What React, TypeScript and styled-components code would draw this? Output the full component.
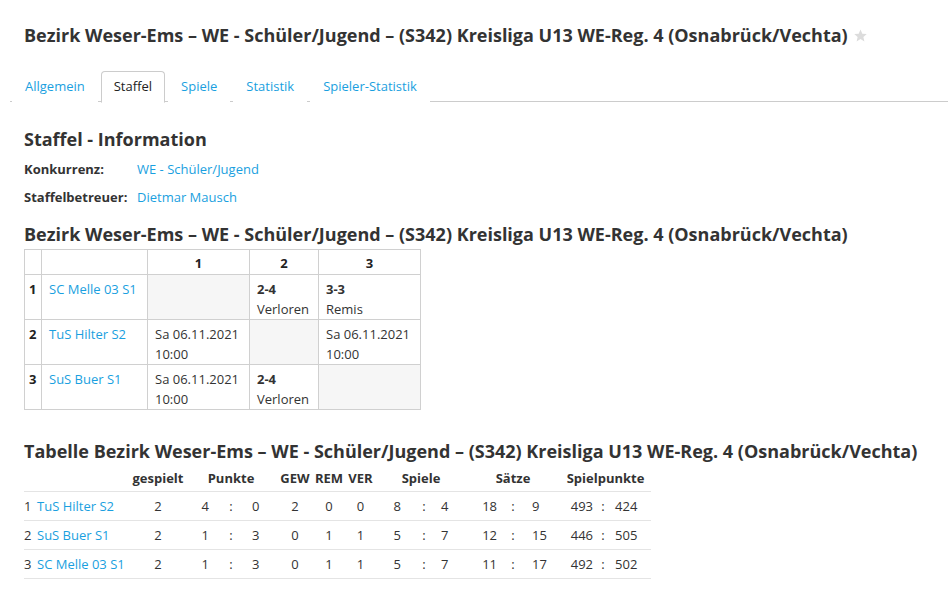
import React from 'react';
import styled, { createGlobalStyle } from 'styled-components';

interface MatrixRow {
  nr: number;
  team: string;
  cells: (null | { top: string; bottom: string; bold?: boolean })[];
}

interface StandingRow {
  rank: number;
  team: string;
  played: number;
  points: [number, number];
  won: number;
  drawn: number;
  lost: number;
  games: [number, number];
  sets: [number, number];
  balls: [number, number];
}

const matrix: MatrixRow[] = [
  {
    nr: 1,
    team: 'SC Melle 03 S1',
    cells: [null, { top: '2-4', bottom: 'Verloren', bold: true }, { top: '3-3', bottom: 'Remis', bold: true }],
  },
  {
    nr: 2,
    team: 'TuS Hilter S2',
    cells: [{ top: 'Sa 06.11.2021', bottom: '10:00' }, null, { top: 'Sa 06.11.2021', bottom: '10:00' }],
  },
  {
    nr: 3,
    team: 'SuS Buer S1',
    cells: [{ top: 'Sa 06.11.2021', bottom: '10:00' }, { top: '2-4', bottom: 'Verloren', bold: true }, null],
  },
];

const standings: StandingRow[] = [
  { rank: 1, team: 'TuS Hilter S2', played: 2, points: [4, 0], won: 2, drawn: 0, lost: 0, games: [8, 4], sets: [18, 9], balls: [493, 424] },
  { rank: 2, team: 'SuS Buer S1', played: 2, points: [1, 3], won: 0, drawn: 1, lost: 1, games: [5, 7], sets: [12, 15], balls: [446, 505] },
  { rank: 3, team: 'SC Melle 03 S1', played: 2, points: [1, 3], won: 0, drawn: 1, lost: 1, games: [5, 7], sets: [11, 17], balls: [492, 502] },
];

const leagueName = 'Bezirk Weser-Ems – WE - Schüler/Jugend – (S342) Kreisliga U13 WE-Reg. 4 (Osnabrück/Vechta)';

const tabs = ['Allgemein', 'Staffel', 'Spiele', 'Statistik', 'Spieler-Statistik'];

// column widths of the standings table, in px
const standingCols = [13, 94, 54, 36, 20, 36, 36, 32, 31, 38, 20, 32, 39, 16, 39, 37, 12, 42];

// padding of the left / right number in each "a : b" group
const pairPads = {
  points: [12, 11],
  games: [13, 7],
  sets: [8, 11],
  balls: [4, 6],
};

const App: React.FC = () => {
  const pair = (v: [number, number], pads: number[]) => (
    <>
      <NumCell $align="right" $pad={pads[0]}>{v[0]}</NumCell>
      <NumCell $align="center">:</NumCell>
      <NumCell $align="left" $pad={pads[1]}>{v[1]}</NumCell>
    </>
  );

  return (
    <Page>
      <GlobalStyle />
      <PageTitle>
        {leagueName}
        <Star viewBox="0 0 24 24">
          <path d="M12 2.5l2.9 6.6 7.1.6-5.4 4.7 1.6 7-6.2-3.7-6.2 3.7 1.6-7L2 9.7l7.1-.6z" />
        </Star>
      </PageTitle>

      <TabBar>
        {tabs.map((t) => (
          <Tab key={t} $active={t === 'Staffel'}>
            {t}
          </Tab>
        ))}
      </TabBar>

      <Content>
        <SectionTitle>Staffel - Information</SectionTitle>
        <InfoList>
          <InfoLabel>Konkurrenz:</InfoLabel>
          <Link href="#">WE - Schüler/Jugend</Link>
          <InfoLabel>Staffelbetreuer:</InfoLabel>
          <Link href="#">Dietmar Mausch</Link>
        </InfoList>

        <MatrixTitle>{leagueName}</MatrixTitle>
        <Matrix>
          <colgroup>
            <col style={{ width: 17 }} />
            <col style={{ width: 106 }} />
            <col style={{ width: 102 }} />
            <col style={{ width: 69 }} />
            <col style={{ width: 102 }} />
          </colgroup>
          <thead>
            <tr>
              <MatrixHead />
              <MatrixHead />
              <MatrixHead>1</MatrixHead>
              <MatrixHead>2</MatrixHead>
              <MatrixHead>3</MatrixHead>
            </tr>
          </thead>
          <tbody>
            {matrix.map((r) => (
              <tr key={r.nr}>
                <MatrixNr>{r.nr}</MatrixNr>
                <MatrixCell>
                  <Link href="#">{r.team}</Link>
                </MatrixCell>
                {r.cells.map((c, i) =>
                  c ? (
                    <MatrixCell key={i}>
                      {c.bold ? <b>{c.top}</b> : c.top}
                      <br />
                      {c.bottom}
                    </MatrixCell>
                  ) : (
                    <MatrixCell key={i} $empty />
                  )
                )}
              </tr>
            ))}
          </tbody>
        </Matrix>

        <TableTitle>Tabelle {leagueName}</TableTitle>
        <Standings>
          <colgroup>
            {standingCols.map((w, i) => (
              <col key={i} style={{ width: w }} />
            ))}
          </colgroup>
          <thead>
            <tr>
              <HeadCell colSpan={2} />
              <HeadCell>gespielt</HeadCell>
              <HeadCell colSpan={3}>Punkte</HeadCell>
              <HeadCell>GEW</HeadCell>
              <HeadCell>REM</HeadCell>
              <HeadCell>VER</HeadCell>
              <HeadCell colSpan={3}>Spiele</HeadCell>
              <HeadCell colSpan={3}>Sätze</HeadCell>
              <HeadCell colSpan={3}>Spielpunkte</HeadCell>
            </tr>
          </thead>
          <tbody>
            {standings.map((s) => (
              <StandingRowTr key={s.rank}>
                <NumCell $align="left">{s.rank}</NumCell>
                <NumCell $align="left">
                  <Link href="#">{s.team}</Link>
                </NumCell>
                <NumCell $align="center">{s.played}</NumCell>
                {pair(s.points, pairPads.points)}
                <NumCell $align="center">{s.won}</NumCell>
                <NumCell $align="center">{s.drawn}</NumCell>
                <NumCell $align="center">{s.lost}</NumCell>
                {pair(s.games, pairPads.games)}
                {pair(s.sets, pairPads.sets)}
                {pair(s.balls, pairPads.balls)}
              </StandingRowTr>
            ))}
          </tbody>
        </Standings>
      </Content>
    </Page>
  );
};

const GlobalStyle = createGlobalStyle`
  body {
    margin: 0;
    background: #fff;
    font-family: "Open Sans", "Noto Sans", sans-serif;
    font-size: 13px;
    color: #333;
  }
`;

const Page = styled.div`
  padding: 17px 0 20px 10px;
`;

const PageTitle = styled.h1`
  display: flex;
  align-items: center;
  margin: 0 0 0 14px;
  font-size: 18px;
  font-weight: 700;
  line-height: 36px;
  color: #333;
  white-space: nowrap;
`;

const Star = styled.svg`
  width: 15px;
  height: 15px;
  margin-left: 5px;
  fill: #dcdcdc;
`;

const TabBar = styled.ul`
  display: flex;
  list-style: none;
  margin: 18px 0 0;
  padding: 0 0 0 2px;
  border-bottom: 1px solid #ccc;
  height: 30px;
`;

const Tab = styled.li<{ $active?: boolean }>`
  height: 30px;
  padding: 0 12px;
  margin-right: 3px;
  margin-bottom: -1px;
  line-height: 29px;
  font-size: 13px;
  color: ${(p) => (p.$active ? '#222' : '#1a9fe0')};
  background: #fff;
  border: 1px solid ${(p) => (p.$active ? '#ccc' : 'transparent')};
  border-bottom-color: ${(p) => (p.$active ? '#fff' : 'transparent')};
  border-radius: 4px 4px 0 0;
  cursor: pointer;
`;

const Content = styled.div`
  padding: 0 14px;
`;

const SectionTitle = styled.h2`
  margin: 24px 0 0;
  font-size: 18px;
  font-weight: 700;
  line-height: 26px;
  color: #333;
`;

const InfoList = styled.div`
  display: grid;
  grid-template-columns: 113px auto;
  grid-auto-rows: 28px;
  align-items: center;
  margin-top: 3px;
`;

const InfoLabel = styled.span`
  font-weight: 700;
  color: #333;
`;

const Link = styled.a`
  color: #1a9fe0;
  text-decoration: none;
  justify-self: start;

  &:hover {
    text-decoration: underline;
  }
`;

const MatrixTitle = styled.h2`
  margin: 10px 0 0;
  font-size: 18px;
  font-weight: 700;
  line-height: 26px;
  color: #333;
  white-space: nowrap;
`;

const Matrix = styled.table`
  border-collapse: collapse;
  table-layout: fixed;
  width: 397px;
  margin-top: 2px;
  line-height: 20px;
`;

const MatrixHead = styled.th`
  border: 1px solid #d0d0d0;
  padding: 3px 8px 1px;
  font-weight: 700;
  text-align: center;
  color: #222;
`;

const MatrixNr = styled.td`
  border: 1px solid #d0d0d0;
  padding: 4px 0 0 4px;
  vertical-align: top;
  font-weight: 700;
  color: #222;
`;

const MatrixCell = styled.td<{ $empty?: boolean }>`
  border: 1px solid #d0d0d0;
  padding: 4px 7px 0 7px;
  height: 40px;
  vertical-align: top;
  white-space: nowrap;
  background: ${(p) => (p.$empty ? '#f6f6f6' : '#fff')};
  color: #333;

  b {
    font-weight: 700;
  }
`;

const TableTitle = styled.h2`
  margin: 28px 0 0;
  font-size: 18px;
  font-weight: 700;
  line-height: 26px;
  color: #333;
  white-space: nowrap;
`;

const Standings = styled.table`
  border-collapse: collapse;
  table-layout: fixed;
  width: 627px;
`;

const HeadCell = styled.th`
  padding: 0;
  height: 27px;
  font-weight: 700;
  font-size: 13px;
  text-align: center;
  vertical-align: middle;
  white-space: nowrap;
  color: #333;
`;

const StandingRowTr = styled.tr`
  border-top: 1px solid #e4e4e4;
  border-bottom: 1px solid #e4e4e4;
  height: 29px;
`;

const NumCell = styled.td<{ $align: 'left' | 'center' | 'right'; $pad?: number }>`
  padding: 0;
  padding-left: ${(p) => (p.$align === 'left' ? p.$pad ?? 0 : 0)}px;
  padding-right: ${(p) => (p.$align === 'right' ? p.$pad ?? 0 : 0)}px;
  text-align: ${(p) => p.$align};
  vertical-align: middle;
  white-space: nowrap;
  color: #333;
`;

export default App;
